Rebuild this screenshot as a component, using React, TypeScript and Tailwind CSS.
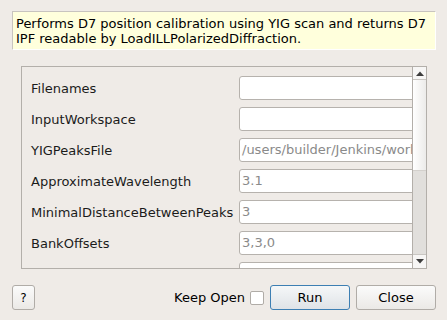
import React from "react";

const rows: { label: string; value: string }[] = [
  { label: "Filenames", value: "" },
  { label: "InputWorkspace", value: "" },
  { label: "YIGPeaksFile", value: "/users/builder/Jenkins/workspace/file" },
  { label: "ApproximateWavelength", value: "3.1" },
  { label: "MinimalDistanceBetweenPeaks", value: "3" },
  { label: "BankOffsets", value: "3,3,0" },
  { label: "", value: "" },
];

export default function App() {
  return (
    <div
      className="w-[447px] h-[320px] bg-[#efebe7] overflow-hidden flex flex-col text-[13px] text-[#1b1b1b]"
      style={{ fontFamily: '"DejaVu Sans", sans-serif' }}
    >
      <div className="mt-[11px] ml-[12px] w-[424px] h-[39px] bg-[#ffffdc] border-t border-l border-[#c8c4bf] border-b-white border-r-white border-b border-r pt-[4px] pl-[3px] leading-[15px] text-black whitespace-nowrap">
        <div>Performs D7 position calibration using YIG scan and returns D7</div>
        <div>IPF readable by LoadILLPolarizedDiffraction.</div>
      </div>

      <div className="mt-[16px] ml-[21px] w-[406px] h-[203px] border border-[#b3afaa] flex">
        <div className="flex-1 overflow-hidden pt-[9px] pl-[9px] flex flex-col gap-[7px]">
          {rows.map((r, i) => (
            <div key={i} className="flex items-center h-[24px] shrink-0">
              <div className="w-[208px] shrink-0 whitespace-nowrap pt-[1px]">{r.label}</div>
              <div className="w-[220px] shrink-0 h-[24px] bg-white border border-[#b6b2ad] rounded-[3px] pl-[2px] flex items-center text-[#8a8a8a] whitespace-nowrap overflow-hidden">
                {r.value}
              </div>
            </div>
          ))}
        </div>
        <div className="w-[14px] shrink-0 border-l border-[#b3afaa] flex flex-col bg-[#e1dfdc]">
          <div className="h-[13px] shrink-0 bg-[#f7f6f5] border-b border-[#c9c6c2] flex items-center justify-center">
            <svg width="8" height="5" viewBox="0 0 8 5">
              <path d="M0 5 L4 0.5 L8 5 Z" fill="#3c3c3c" />
            </svg>
          </div>
          <div className="h-[91px] shrink-0 bg-gradient-to-r from-white to-[#ecebe9] border-b border-[#d3d0cc]" />
          <div className="flex-1" />
          <div className="h-[14px] shrink-0 bg-[#f7f6f5] border-t border-[#c9c6c2] flex items-center justify-center">
            <svg width="8" height="5" viewBox="0 0 8 5">
              <path d="M0 0 L8 0 L4 4.5 Z" fill="#3c3c3c" />
            </svg>
          </div>
        </div>
      </div>

      <div className="mt-[16px] flex items-center h-[25px] pl-[12px] pr-[11px]">
        <button className="w-[23px] h-[25px] border border-[#b0aca7] rounded-[3px] bg-gradient-to-b from-[#fbfbfb] to-[#ebe9e6] text-[12px] text-black flex items-center justify-center">
          ?
        </button>
        <div className="flex-1" />
        <span className="text-black mr-[5px]">Keep Open</span>
        <div className="w-[14px] h-[14px] bg-white border border-[#b0aca7] rounded-[2px] mr-[6px]" />
        <button className="w-[80px] h-[25px] border border-[#3d7fb3] rounded-[3px] bg-gradient-to-b from-[#f5f7f8] to-[#dfe3e7] text-black flex items-center justify-center mr-[6px]">
          Run
        </button>
        <button className="w-[80px] h-[25px] border border-[#b0aca7] rounded-[3px] bg-gradient-to-b from-[#fbfbfb] to-[#ebe9e6] text-black flex items-center justify-center">
          Close
        </button>
      </div>
    </div>
  );
}
